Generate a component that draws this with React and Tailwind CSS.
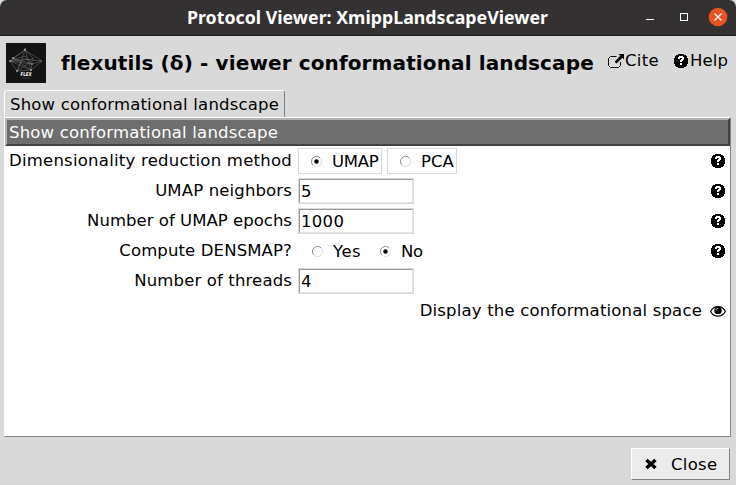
import React from "react";

const HelpIcon = () => (
  <svg className="block h-[14px] w-[14px] shrink-0" viewBox="0 0 14 14" shapeRendering="crispEdges">
    <path d="M4 0h6v1h2v1h1v2h1v6h-1v2h-1v1h-2v1H4v-1H2v-1H1v-2H0V4h1V2h1V1h2z" fill="#000" />
    <path d="M5 2h4v1h1v3H9v1H8v1H6V6h1V5h1V4H6v1H4V3h1zM6 9h2v2H6z" fill="#fff" />
  </svg>
);

const CiteIcon = () => (
  <svg className="block h-[14px] w-[17px] shrink-0" viewBox="0 0 17 14">
    <path d="M8.500 2.500H2.500L.5 4.500v7l2 2h8l2-2V8" fill="none" stroke="#000" />
    <path d="M10.500 0H16v5.500l-1.700-1.700L8.500 9.600 6.600 7.700l5.700-5.900z" fill="#000" />
  </svg>
);

const EyeIcon = () => (
  <svg className="block h-[11px] w-[16px] shrink-0" viewBox="0 0 16 11">
    <path d="M.6 5.500C2.400 2 5 .7 8 .7s5.600 1.300 7.400 4.800C13.600 8.800 11 10.200 8 10.200S2.400 8.800.6 5.500z" fill="#fff" stroke="#000" strokeWidth="1.200" />
    <circle cx="8" cy="4.400" r="3.700" fill="#000" />
    <path d="M6 4.300C6 3 6.800 2.400 8 2.400" fill="none" stroke="#fff" strokeWidth=".8" />
  </svg>
);

const Logo = () => (
  <svg className="block h-10 w-10 shrink-0 bg-[#141414]" viewBox="0 0 40 40">
    <g fill="none" stroke="#777" strokeWidth=".5">
      <path d="M19 7L4 18l7 10 14-1 11-9-17-11-8 21 17-11M19 7l6 20L4 18l15-5 7 8 10-3-19-2-6 12M7 15l19 6-1 6L7 15l12-8 9 9-24 2 22 3" />
    </g>
    <g fill="#aaa">
      <circle cx="19" cy="6.500" r="1.100" /><circle cx="4" cy="18" r=".9" /><circle cx="7" cy="15" r=".9" />
      <circle cx="11" cy="28" r=".9" /><circle cx="25" cy="27" r=".9" /><circle cx="26" cy="21" r=".8" />
    </g>
    <text x="14.500" y="33" textLength="11" lengthAdjust="spacingAndGlyphs" fill="#fff" fontFamily="DejaVu Sans" fontSize="5" fontWeight="bold" fontStyle="italic">FLEX</text>
    <path d="M16 35h8" stroke="#444" strokeWidth=".7" />
  </svg>
);

const Radio = ({ checked }) => (
  <svg className="block h-[11px] w-[11px] shrink-0" viewBox="0 0 11 11">
    <path d="M1.900 9.100A5 5 0 0 1 9.100 1.900" fill="none" stroke="#8a8a8a" strokeWidth="1" />
    <path d="M9.100 1.900A5 5 0 0 1 1.900 9.100" fill="none" stroke="#dcdcdc" strokeWidth="1" />
    {checked && <circle cx="5.500" cy="5.500" r="2.200" fill="#000" />}
  </svg>
);

const Entry = ({ value }) => (
  <div className="flex h-[26px] w-[116px] items-center border border-[#d9d9d9]">
    <div className="flex h-full w-full items-center border border-t-[#999] border-l-[#999] border-r-[#e3e3e3] border-b-[#e3e3e3] pl-px pt-px text-[16.500px] tracking-[0.3px]">{value}</div>
  </div>
);

const Row = ({ label, spacing, help, children }) => (
  <div className="flex h-[30px] items-center">
    <div className={`w-[287px] shrink-0 text-right ${spacing}`}>{label}</div>
    <div className="ml-[6px] flex flex-1 items-center">{children}</div>
    {help && <div className="mr-[5px]"><HelpIcon /></div>}
  </div>
);

export default function App() {
  return (
    <div className="flex h-[485px] w-[736px] flex-col overflow-hidden whitespace-nowrap bg-[#d9d9d9] font-['DejaVu_Sans',sans-serif] text-[16.500px] leading-[20px] text-black">
      <header className="flex h-9 shrink-0 items-center rounded-t-[7px] border-b border-[#1d1b1c] bg-[#333132]">
        <div className="ml-[187px] w-[449px] text-white">
          <svg className="block h-6 w-[364px]" viewBox="0 0 364 24">
            <text x="0" y="17.500" textLength="361" lengthAdjust="spacingAndGlyphs" fill="#fff" fontFamily="Noto Sans, sans-serif" fontSize="17" fontWeight="700">Protocol Viewer: XmippLandscapeViewer</text>
          </svg>
        </div>
        <svg className="block h-9 w-[100px]" viewBox="0 0 100 36">
          <path d="M10 19.500h8" stroke="#fff" />
          <rect x="44.500" y="13.500" width="7" height="7" fill="none" stroke="#fff" />
          <circle cx="82" cy="17" r="9.300" fill="#e95420" />
          <path d="M78.500 13.500l7 7m0-7l-7 7" stroke="#fff" strokeWidth="1.300" />
        </svg>
      </header>

      <div className="flex h-[54px] shrink-0 items-start pl-[6px] pt-[7px]">
        <Logo />
        <h1 className="ml-[15px] mt-[8px] w-[547px] text-[20px] font-bold leading-6 tracking-[0.12px]">flexutils (δ) - viewer conformational landscape</h1>
        <div className="mt-[8px] flex w-[66px] items-center tracking-[0.35px]"><CiteIcon />Cite</div>
        <div className="mt-[8px] flex items-center gap-[2px] tracking-[0.1px]"><HelpIcon />Help</div>
      </div>

      <div className="ml-1 flex h-[27px] w-[281px] shrink-0 items-center rounded-t-[3px] border-l border-t border-r border-l-white border-t-white border-r-[#828282] pl-[5px] pt-px tracking-[0.19px]">
        Show conformational landscape
      </div>

      <main className="ml-1 flex h-[320px] w-[727px] shrink-0 flex-col border border-t-white border-l-white border-r-[#828282] border-b-[#828282] bg-white">
        <div className="flex h-[28px] shrink-0 items-center border-2 border-t-[#b3b3b3] border-l-[#b3b3b3] border-r-[#434343] border-b-[#434343] bg-[#6e6e6e] pl-[2px] pt-px tracking-[0.19px] text-white">
          Show conformational landscape
        </div>
        <Row label="Dimensionality reduction method" spacing="tracking-[0.24px]" help>
          <div className="flex h-[26px] w-[84px] items-center border border-[#d9d9d9] pl-[12px]"><Radio checked /><span className="ml-[10px] mt-[2px] tracking-[-0.3px]">UMAP</span></div>
          <div className="ml-[5px] flex h-[26px] w-[70px] items-center border border-[#d9d9d9] pl-[12px]"><Radio /><span className="ml-[10px] mt-[2px]">PCA</span></div>
        </Row>
        <Row label="UMAP neighbors" spacing="tracking-[0.14px]" help><Entry value="5" /></Row>
        <Row label="Number of UMAP epochs" spacing="tracking-[0.03px]" help><Entry value="1000" /></Row>
        <Row label="Compute DENSMAP?" spacing="tracking-[0.13px]" help>
          <div className="ml-[14px] flex w-[68px] items-center"><Radio /><span className="ml-[10px] mt-[2px] tracking-[0.5px]">Yes</span></div>
          <div className="flex items-center"><Radio checked /><span className="ml-[10px] mt-[2px] tracking-[-0.3px]">No</span></div>
        </Row>
        <Row label="Number of threads" spacing="tracking-[0.14px]"><Entry value="4" /></Row>
        <div className="flex h-[30px] items-center justify-end gap-2 pr-1 tracking-[0.18px]">Display the conformational space<EyeIcon /></div>
      </main>

      <footer className="flex flex-1 items-start justify-end pr-[6px] pt-[11px]">
        <button className="flex h-[32px] w-[99px] items-center border border-t-white border-l-white border-r-[#828282] border-b-[#828282] bg-[#ececec] pl-[13px]">
          <svg className="block h-3 w-3" viewBox="0 0 12 12"><path d="M1.500 2l9 8m0-8l-9 8" stroke="#000" strokeWidth="3.500" /></svg>
          <span className="ml-[14px] mt-[2px] tracking-[0.3px]">Close</span>
        </button>
      </footer>
    </div>
  );
}
